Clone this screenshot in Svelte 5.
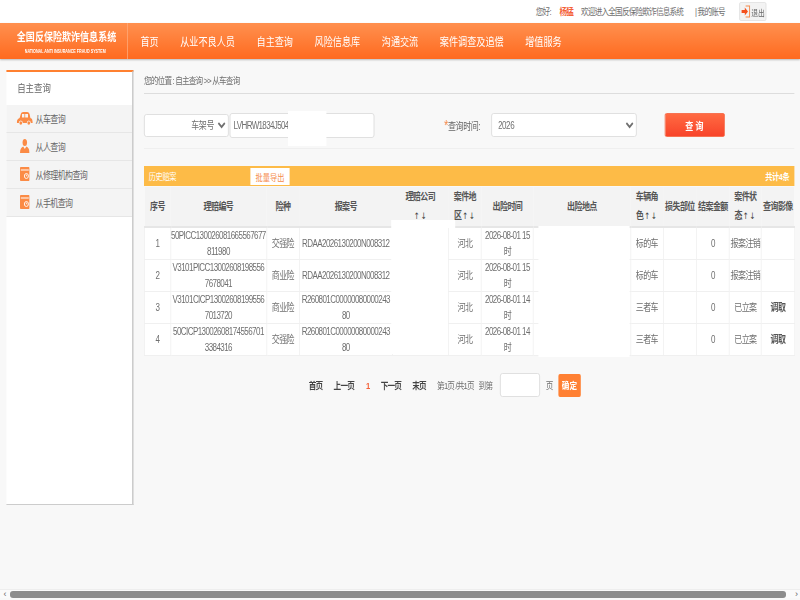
<script lang="ts">
  const nav = ["首页", "从业不良人员", "自主查询", "风险信息库", "沟通交流", "案件调查及追偿", "增值服务"];
  const side = [
    { label: "从车查询", icon: "car" },
    { label: "从人查询", icon: "person" },
    { label: "从修理机构查询", icon: "doc" },
    { label: "从手机查询", icon: "doc" },
  ];
  // lines: 表头按原图断行，带排序箭头的列第二行放箭头
  const columns = [
    { lines: ["序号"], width: 32.5 },
    { lines: ["理赔编号"], width: 120 },
    { lines: ["险种"], width: 41.25 },
    { lines: ["报案号"], width: 116 },
    { lines: ["理赔公司", ""], width: 70.25 },
    { lines: ["案件地", "区"], width: 41.25 },
    { lines: ["出险时间"], width: 65 },
    { lines: ["出险地点"], width: 121.25 },
    { lines: ["车辆角", "色"], width: 41.25 },
    { lines: ["损失部位"], width: 41.25 },
    { lines: ["结案金额"], width: 41.25 },
    { lines: ["案件状", "态"], width: 40 },
    { lines: ["查询影像"], width: 41.25 },
  ];
  const rows = [
    ["1", "50PICC130026081665567677\n811980", "交强险", "RDAA2026130200N008312", "", "河北", "2026-08-01 15时", "", "标的车", "", "0", "报案注销", ""],
    ["2", "V3101PICC13002608198556\n7678041", "商业险", "RDAA2026130200N008312", "", "河北", "2026-08-01 15时", "", "标的车", "", "0", "报案注销", ""],
    ["3", "V3101CICP13002608199556\n7013720", "商业险", "R260801C0000008000024380", "", "河北", "2026-08-01 14时", "", "三者车", "", "0", "已立案", "调取"],
    ["4", "50CICP13002608174556701\n3384316", "交强险", "R260801C0000008000024380", "", "河北", "2026-08-01 14时", "", "三者车", "", "0", "已立案", "调取"],
  ];
</script>

<div class="viewport">
  <div class="page">
    <div class="topbar">
      <span>您好:</span>
      <span class="user">杨猛</span>
      <span class="welcome">欢迎进入全国反保险欺诈信息系统</span>
      <span class="account">| 我的账号</span>
      <button class="logout">
        <svg width="12" height="13" viewBox="0 0 12 13">
          <path d="M6 1h5v11H6" fill="none" stroke="#f58a4b" stroke-width="1.2" />
          <path d="M1 5h4V2.5L9 6.5l-4 4V8H1z" fill="#f4511e" />
        </svg>
        退出
      </button>
    </div>

    <header class="header">
      <div class="logo">
        <div class="logo-title">全国反保险欺诈信息系统</div>
        <div class="logo-sub">NATIONAL ANTI INSURANCE FRAUD SYSTEM</div>
      </div>
      <nav class="nav">
        {#each nav as item}
          <span>{item}</span>
        {/each}
      </nav>
    </header>

    <div class="body">
      <aside class="sidebar">
        <div class="side-title">自主查询</div>
        {#each side as item}
          <div class="side-item">
            <span class="side-icon">
              {#if item.icon === "car"}
                <svg width="20" height="13" viewBox="0 0 20 13">
                  <path d="M0 11c0-3 1-4 3.5-5L5 2c.5-1.300 1.500-2 3-2h5c1.500 0 2.300.7 3 2l1 4c2 .6 3 2 3 5h-2.500a2.500 2.500 0 0 0-5 0h-5a2.500 2.500 0 0 0-5 0z" fill="#fb8b45" />
                  <circle cx="5" cy="11" r="1.700" fill="#fb8b45" />
                  <circle cx="15" cy="11" r="1.700" fill="#fb8b45" />
                  <rect x="6.500" y="2" width="3" height="3.500" fill="#f4f4f4" />
                  <rect x="10.500" y="2" width="3.500" height="3.500" fill="#f4f4f4" />
                </svg>
              {:else if item.icon === "person"}
                <svg width="12" height="14" viewBox="0 0 12 14">
                  <ellipse cx="6" cy="3.500" rx="2.800" ry="3.500" fill="#fb8b45" />
                  <path d="M0 14c0-4 2-6 4-6.500L6 10l2-2.500c2 .5 4 2.500 4 6.500z" fill="#fb8b45" />
                </svg>
              {:else}
                <svg width="12" height="14" viewBox="0 0 12 14">
                  <rect width="12" height="14" rx="1" fill="#fb8b45" />
                  <rect x="1" y="2.500" width="10" height="1" fill="#fff" />
                  <circle cx="8" cy="9" r="2.500" fill="none" stroke="#fff" stroke-width="1" />
                  <path d="M8 7.500V9h1" fill="none" stroke="#fff" stroke-width=".8" />
                </svg>
              {/if}
            </span>
            {item.label}
          </div>
        {/each}
      </aside>

      <main class="main">
        <div class="crumb">您的位置 : 自主查询 &gt;&gt; 从车查询</div>

        <div class="search">
          <select class="type-select">
            <option>车架号</option>
          </select>
          <div class="vin">
            <input value="LVHRW1834J504" />
            <div class="mask vin-mask"></div>
          </div>
          <label class="time-label"><i>*</i>查询时间:</label>
          <select class="year-select">
            <option>2026</option>
          </select>
          <button class="query">查 询</button>
        </div>

        <div class="bar">
          <span>历史赔案</span>
          <button class="export">批量导出</button>
          <span class="total">共计4条</span>
        </div>

        <div class="table-wrap">
          <table>
            <colgroup>
              {#each columns as col}
                <col style="width: {col.width}px" />
              {/each}
            </colgroup>
            <thead>
              <tr>
                {#each columns as col}
                  <th>
                    {col.lines[0]}
                    {#if col.lines.length > 1}
                      <br />{col.lines[1]}<span class="arrows">↑↓</span>
                    {/if}
                  </th>
                {/each}
              </tr>
            </thead>
            <tbody>
              {#each rows as row}
                <tr>
                  {#each row as cell, i}
                    <td class:link={i === 12}>{cell}</td>
                  {/each}
                </tr>
              {/each}
            </tbody>
          </table>
          <div class="mask mask-a"></div>
          <div class="mask mask-b"></div>
          <div class="mask mask-c"></div>
        </div>

        <div class="pager">
          <span class="strong first">首页</span>
          <span class="strong">上一页</span>
          <span class="current">1</span>
          <span class="strong">下一页</span>
          <span class="strong">末页</span>
          <span>第1页 /共1页</span>
          <span class="goto">到第</span>
          <input class="page-input" />
          <span>页</span>
          <button class="confirm">确定</button>
        </div>
      </main>
    </div>
  </div>

  <div class="scrollbar">
    <span class="arrow">‹</span>
    <div class="thumb"></div>
    <span class="arrow right">›</span>
  </div>
</div>

<style>
  :global(body) {
    margin: 0;
    background: #f8f8f8;
  }

  .viewport {
    position: relative;
    width: 800px;
    height: 600px;
    overflow: hidden;
    background: #f8f8f8;
    font-family: "Liberation Sans", "Noto Sans CJK SC", sans-serif;
    color: #6f6f6f;
  }

  /* 原图整体被横向压缩过，这里按 1000 宽排版再压回去 */
  .page {
    width: 1000px;
    transform: scaleX(0.8);
    transform-origin: 0 0;
  }

  .topbar {
    height: 23px;
    background: #fff;
    display: flex;
    align-items: center;
    justify-content: flex-end;
    padding: 0 42px 2px 0;
    font-size: 9.5px;
    letter-spacing: -1px;
    box-sizing: border-box;
  }

  .user {
    color: #f4623a;
    font-weight: bold;
    margin-left: 11px;
  }

  .welcome {
    margin-left: 10px;
  }

  .account {
    margin-left: 15px;
    margin-right: 18px;
  }

  .logout {
    width: 34px;
    height: 19px;
    margin-top: 2px;
    padding: 0;
    display: flex;
    align-items: center;
    justify-content: center;
    gap: 1px;
    background: #f3f3f3;
    border: 1px solid #e2e2e2;
    border-radius: 2px;
    font: inherit;
    font-size: 8.500px;
    color: #666;
  }

  .header {
    height: 36px;
    display: flex;
    background: linear-gradient(#ff904f, #ff6a1f);
    color: #fff;
    box-shadow: 0 1px 2px rgba(0, 0, 0, 0.25);
    position: relative;
  }

  .logo {
    width: 160px;
    box-sizing: border-box;
    border-right: 1px solid #ffa877;
    padding: 6px 0 0 21px;
  }

  .logo-title {
    font-size: 11.300px;
    line-height: 16px;
    font-weight: bold;
    white-space: nowrap;
  }

  .logo-sub {
    font-size: 4.600px;
    line-height: 8px;
    margin: 3px 0 0 10px;
    font-weight: bold;
    white-space: nowrap;
  }

  .nav {
    display: flex;
    align-items: center;
    gap: 27px;
    padding-left: 15.500px;
    font-size: 11.400px;
  }

  .body {
    display: flex;
    align-items: flex-start;
  }

  .sidebar {
    width: 159px;
    height: 435px;
    margin: 11px 0 0 7.500px;
    box-sizing: border-box;
    background: #fff;
    border-top: 2px solid #ff8030;
    border-right: 2px solid #ccc;
    border-bottom: 1px solid #ccc;
    font-size: 10px;
    letter-spacing: -0.8px;
    flex: none;
  }

  .side-title {
    height: 33px;
    line-height: 33px;
    padding-left: 14px;
    font-size: 10.500px;
    letter-spacing: 0;
    color: #666;
  }

  .side-item {
    height: 28px;
    box-sizing: border-box;
    display: flex;
    align-items: center;
    padding: 0 0 1px 37px;
    position: relative;
    background: #f4f4f4;
    border-bottom: 1px solid #e6e6e6;
    color: #666;
  }

  .side-icon {
    position: absolute;
    left: 12px;
    width: 22px;
    display: flex;
    justify-content: center;
  }

  .main {
    margin-left: 13.500px;
    width: 812.500px;
    flex: none;
  }

  .crumb {
    height: 34px;
    line-height: 44px;
    font-size: 9.500px;
    letter-spacing: -1px;
    border-bottom: 1px solid #ddd;
  }

  .search {
    height: 46px;
    display: flex;
    align-items: center;
    padding-top: 8px;
    margin-bottom: 17px;
    border-bottom: 1px solid #efefef;
    font-size: 10px;
  }

  select,
  .vin input {
    box-sizing: border-box;
    background: #fff;
    border: 1px solid #ddd;
    border-radius: 3px;
    font: inherit;
    letter-spacing: -0.5px;
    color: #6f6f6f;
    outline: none;
  }

  .type-select {
    width: 106px;
    height: 23px;
    padding-left: 54px;
  }

  .vin {
    position: relative;
    margin-left: 1px;
  }

  .vin input {
    display: block;
    width: 181px;
    height: 25px;
    padding: 0 4px;
    letter-spacing: -0.8px;
  }

  .vin-mask {
    left: 73px;
    top: -2px;
    width: 47.500px;
    height: 35px;
  }

  .time-label {
    margin-left: 87px;
    width: 50.500px;
    white-space: nowrap;
    letter-spacing: -0.5px;
    color: #666;
  }

  .time-label i {
    color: #f58a4b;
    font-style: normal;
    font-size: 14px;
    line-height: 0;
  }

  .year-select {
    margin-left: 8px;
    width: 182px;
    height: 23.500px;
    padding-left: 4px;
  }

  .query {
    margin-left: 35px;
    width: 75px;
    height: 23.500px;
    background: linear-gradient(#ff6a42, #f8442a);
    border: 1px solid #f6623e;
    border-radius: 2px;
    color: #fff;
    font: inherit;
    font-weight: bold;
  }

  .bar {
    height: 20px;
    display: flex;
    align-items: center;
    background: #fdbb47;
    color: #fff;
    font-size: 9px;
    letter-spacing: -0.5px;
    padding: 0 6px 0 6px;
    position: relative;
  }

  .export {
    position: absolute;
    left: 133px;
    top: 2px;
    width: 49px;
    height: 17px;
    padding: 2px 0 0;
    background: #fff;
    border: 0;
    font: inherit;
    color: #f58a4b;
  }

  .total {
    margin-left: auto;
    font-weight: bold;
  }

  .table-wrap {
    position: relative;
    margin-top: 1px;
  }

  table {
    width: 812.500px;
    table-layout: fixed;
    border-collapse: collapse;
    font-size: 10px;
    letter-spacing: -0.7px;
  }

  th {
    height: 40px;
    box-sizing: border-box;
    padding: 0;
    background: #f3f3f3;
    border-bottom: 2px solid #e6e6e6;
    color: #555;
    line-height: 19px;
    font-weight: bold;
    white-space: nowrap;
    overflow: hidden;
  }

  .arrows {
    margin-left: 1px;
    font-family: "DejaVu Sans", sans-serif;
    font-weight: normal;
    font-size: 9px;
    letter-spacing: 1px;
    color: #444;
  }

  td {
    height: 31.500px;
    padding: 0;
    box-sizing: border-box;
    background: #fff;
    border: 1px solid #f0f0f0;
    text-align: center;
    line-height: 15.500px;
    word-break: break-all;
    white-space: pre-line;
  }

  td.link {
    color: #555;
    font-weight: bold;
  }

  .mask {
    position: absolute;
    background: #fff;
  }

  .mask-a {
    left: 308.750px;
    top: 33px;
    width: 80px;
    height: 8px;
  }

  .mask-b {
    left: 309px;
    top: 41px;
    width: 71px;
    height: 126px;
  }

  .mask-c {
    left: 492.500px;
    top: 39px;
    width: 114px;
    height: 131px;
  }

  .pager {
    display: flex;
    align-items: center;
    height: 24px;
    margin-top: 17px;
    font-size: 9.500px;
    letter-spacing: -1px;
  }

  .strong {
    color: #444;
    font-weight: bold;
    margin-right: 14px;
  }

  .first {
    margin-left: 206px;
  }

  .current {
    color: #f4623a;
    font-weight: bold;
    margin: 0 14px 0 1px;
  }

  .goto {
    margin-left: 6px;
  }

  .page-input {
    box-sizing: border-box;
    width: 50px;
    height: 24px;
    margin: 0 7px 0 10px;
    background: #fff;
    border: 1px solid #ddd;
    border-radius: 3px;
  }

  .confirm {
    width: 28px;
    height: 23px;
    margin-left: 7px;
    padding: 0;
    background: #ff8033;
    border: 0;
    border-radius: 2px;
    color: #fff;
    font: inherit;
    font-weight: bold;
  }

  .scrollbar {
    position: absolute;
    left: 0;
    right: 0;
    bottom: 2px;
    height: 9px;
    display: flex;
    align-items: center;
    background: #fafafa;
    border-top: 1px solid #eee;
    box-sizing: border-box;
  }

  .arrow {
    width: 10px;
    text-align: center;
    font-size: 9px;
    line-height: 8px;
    color: #666;
  }

  .arrow.right {
    width: 14px;
    text-align: right;
    padding-right: 2px;
    box-sizing: border-box;
  }

  .thumb {
    flex: 1;
    height: 7px;
    background: #8c8c8c;
    border-radius: 3px;
  }
</style>
